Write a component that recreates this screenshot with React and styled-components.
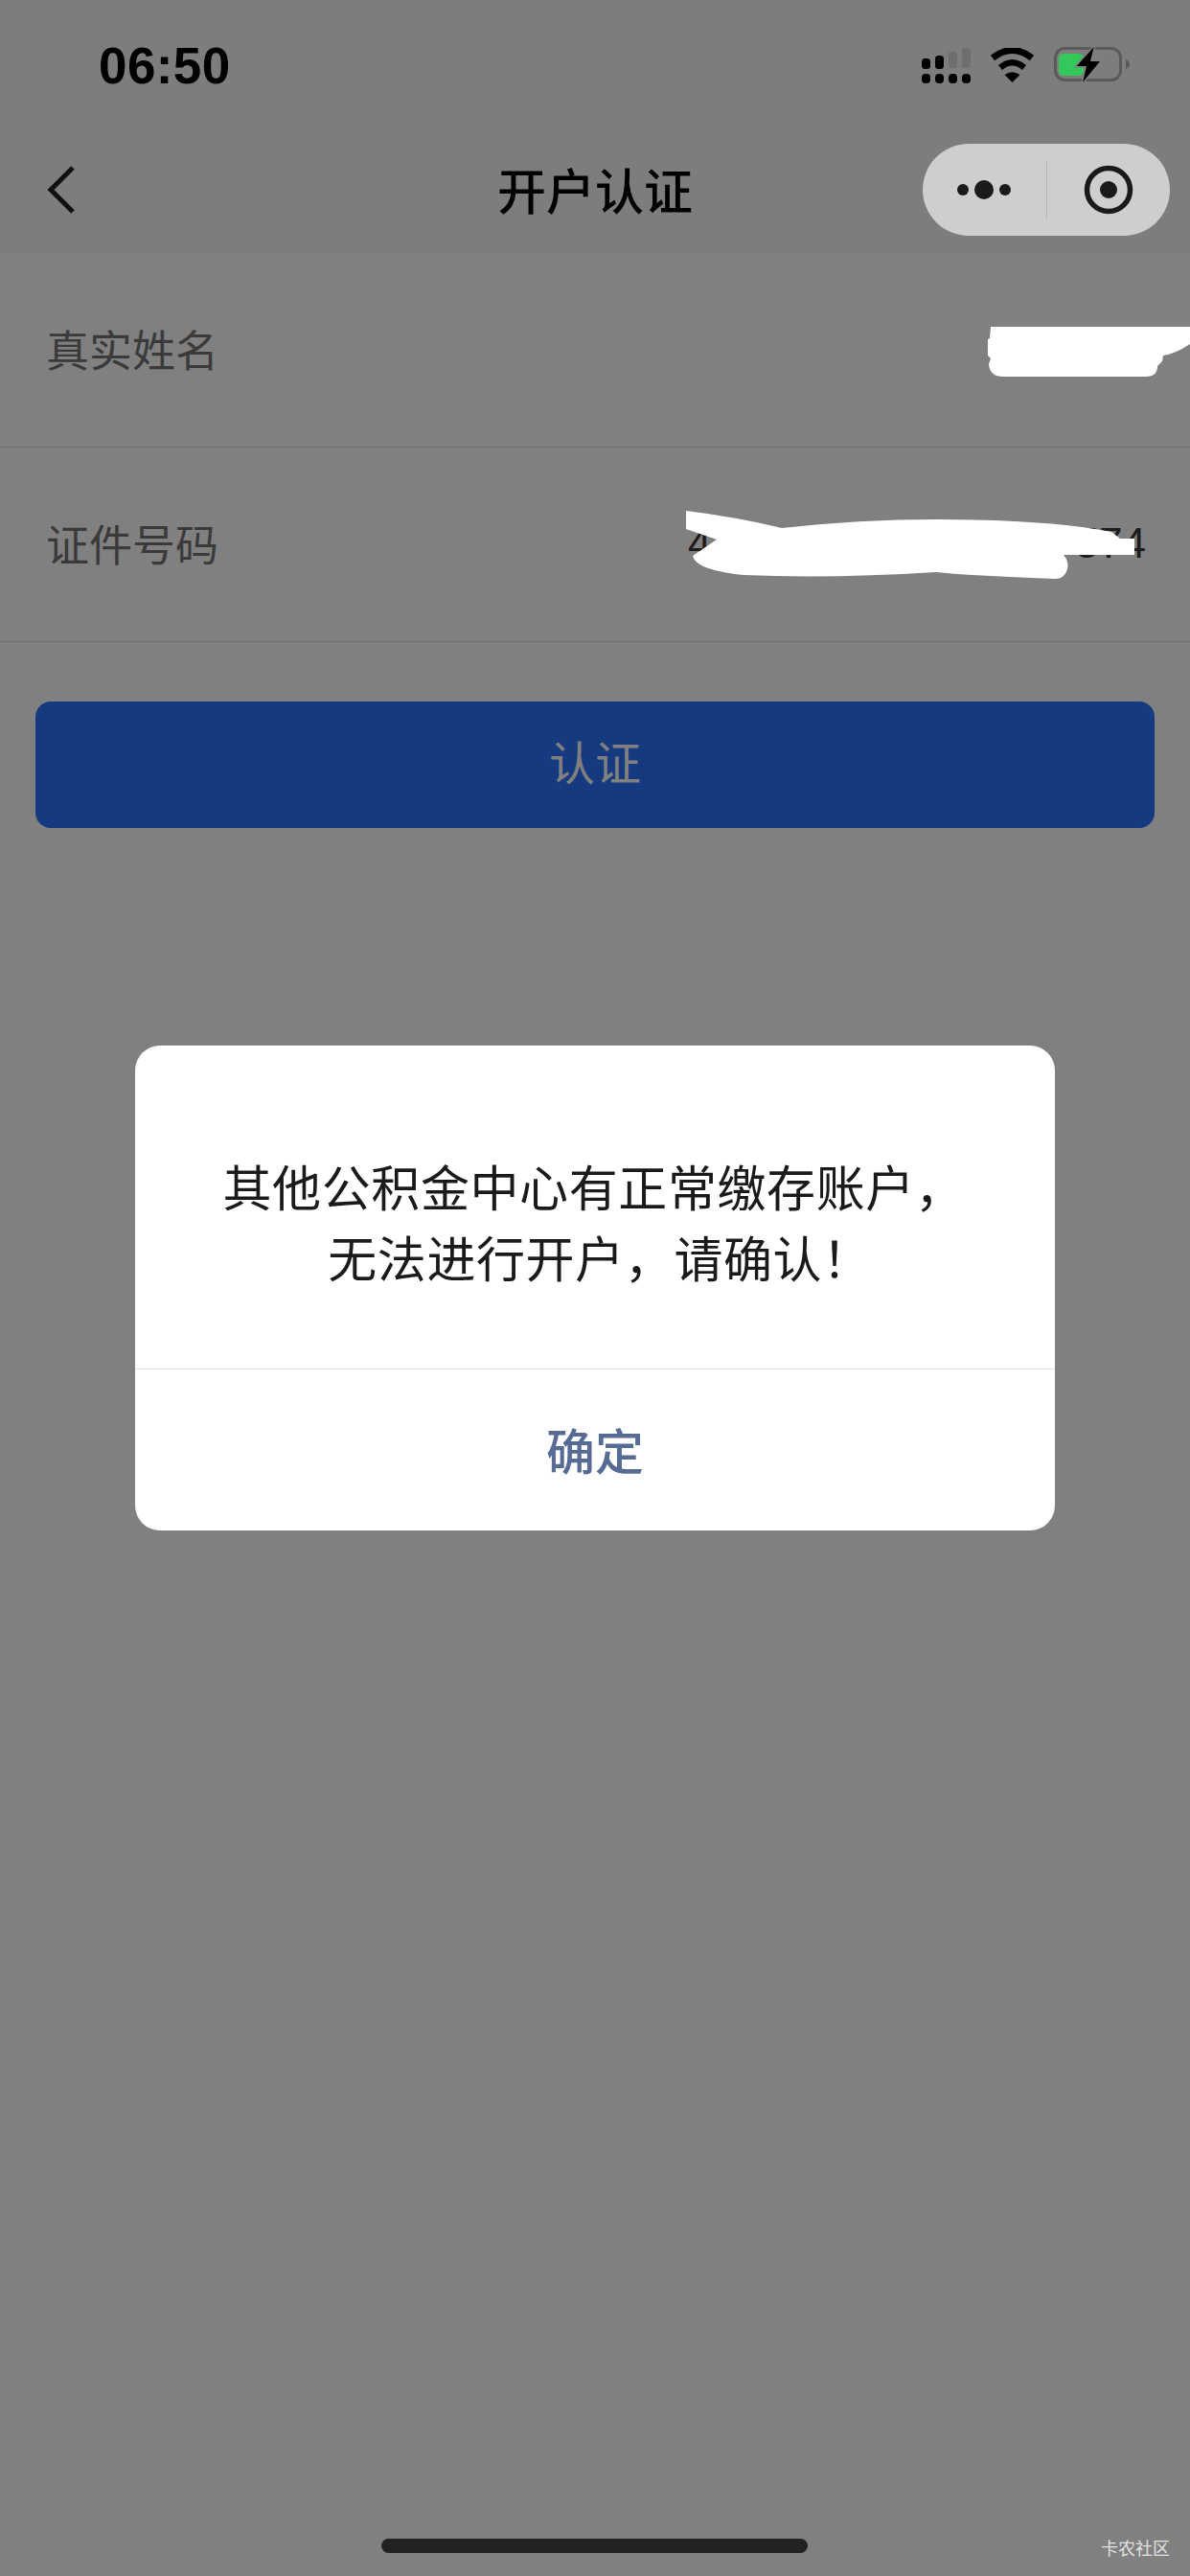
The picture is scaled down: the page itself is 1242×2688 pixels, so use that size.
import React from 'react';
import styled, { createGlobalStyle } from 'styled-components';

const CJK = '"Liberation Sans", "Noto Sans CJK SC", sans-serif';

const GlobalStyle = createGlobalStyle`
  html, body {
    margin: 0;
    padding: 0;
    background: #808080;
  }
  * {
    box-sizing: border-box;
  }
`;

const Page = styled.div`
  position: relative;
  width: 1242px;
  height: 2688px;
  overflow: hidden;
  background: #808080;
  font-family: ${CJK};
`;

const Header = styled.header`
  height: 264px;
  background: #7d7d7d;
`;

const StatusBar = styled.div`
  height: 132px;
  padding: 4px 63px 0 103px;
  display: flex;
  align-items: center;
  justify-content: space-between;
`;

const Time = styled.span`
  font-size: 53px;
  font-weight: 700;
  letter-spacing: 0.4px;
  color: #000;
`;

const StatusIcons = styled.div`
  display: flex;
  align-items: center;
  gap: 20px;
`;

const NavBar = styled.div`
  position: relative;
  height: 132px;
  padding: 0 21px 0 48px;
  display: flex;
  align-items: center;
  justify-content: space-between;
`;

const NavTitle = styled.h1`
  position: absolute;
  left: 0;
  right: 0;
  margin: 0;
  padding-bottom: 3px;
  text-align: center;
  font-size: 51px;
  font-weight: 500;
  font-family: "Noto Sans CJK SC", sans-serif;
  color: #000;
`;

const Capsule = styled.div`
  width: 258px;
  height: 96px;
  border-radius: 48px;
  background: #cecece;
  display: grid;
  grid-template-columns: 1fr 1px 1fr;
  align-items: center;
  justify-items: center;
`;

const CapsuleDivider = styled.span`
  width: 1px;
  height: 60px;
  background: #b4b4b4;
`;

const Row = styled.div`
  position: relative;
  height: 203px;
  padding: 0 46px 3px 48px;
  border-bottom: 1px solid #6f6f6f;
  display: flex;
  align-items: center;
  justify-content: space-between;
`;

const Label = styled.span`
  font-size: 45px;
  color: #3a3a3a;
`;

const Value = styled.span`
  width: 478px;
  display: flex;
  justify-content: space-between;
  font-size: 44px;
  color: #1c1c1c;
`;

const Redaction = styled.svg`
  position: absolute;
  right: 0;
  top: ${(p) => p.$top}px;
`;

const SubmitButton = styled.button`
  display: block;
  width: 1168px;
  height: 132px;
  margin: 62px 0 0 37px;
  padding: 0 0 10px;
  border: 0;
  border-radius: 16px;
  background: #153a7f;
  color: #808080;
  font-family: ${CJK};
  font-size: 48px;
`;

const Mask = styled.div`
  position: absolute;
  inset: 0;
  display: flex;
  align-items: center;
  justify-content: center;
`;

const Dialog = styled.div`
  width: 960px;
  height: 506px;
  border-radius: 26px;
  background: #fff;
  display: flex;
  flex-direction: column;
  overflow: hidden;
`;

const DialogBody = styled.div`
  flex: 1;
  padding-top: 38px;
  border-bottom: 1px solid #e4e4e4;
  display: flex;
  flex-direction: column;
  align-items: center;
  justify-content: center;
  font-size: 51px;
  line-height: 74px;
  letter-spacing: 0.6px;
  color: #1a1a1a;
`;

const DialogLine = styled.div`
  margin-left: ${(p) => p.$nudge}px;
`;

const DialogAction = styled.div`
  height: 168px;
  padding-bottom: 3px;
  display: flex;
  align-items: center;
  justify-content: center;
  font-size: 51px;
  font-weight: 500;
  font-family: "Noto Sans CJK SC", sans-serif;
  color: #576b95;
`;

const HomeBar = styled.div`
  position: absolute;
  left: 398px;
  top: 2649px;
  width: 445px;
  height: 15px;
  border-radius: 8px;
  background: #222;
`;

const Watermark = styled.span`
  position: absolute;
  right: 21px;
  top: 2645px;
  font-size: 18px;
  color: #e2e2e2;
`;

function SignalIcon() {
  return (
    <svg width="51" height="37" viewBox="0 0 51 37">
      <rect x="0" y="11" width="9" height="11" rx="3.5" fill="#000" />
      <rect x="14" y="8" width="9" height="14" rx="3.5" fill="#000" />
      <rect x="28" y="4" width="9" height="17" rx="3" fill="#6e6e6e" />
      <rect x="42" y="0" width="9" height="21" rx="3" fill="#6e6e6e" />
      {[0, 14, 28, 42].map((x) => (
        <rect key={x} x={x} y="27" width="9" height="10" rx="4" fill="#000" />
      ))}
    </svg>
  );
}

function WifiIcon() {
  return (
    <svg width="47" height="36" viewBox="0 0 47 36">
      <path d="M3 10.5 Q23.5 -5.5 44 10.5" fill="none" stroke="#000" strokeWidth="7" />
      <path d="M11 20.5 Q23.5 10 36 20.5" fill="none" stroke="#000" strokeWidth="6.5" />
      <path d="M15.5 28 Q23.5 22.5 31.5 28 L23.5 36 Z" fill="#000" />
    </svg>
  );
}

function BatteryIcon() {
  return (
    <svg width="79" height="38" viewBox="0 0 79 38">
      <rect x="1.5" y="1.5" width="68" height="33" rx="10" fill="none" stroke="#5a5a5a" strokeWidth="3" />
      <rect x="5" y="7" width="26" height="23" rx="5" fill="#34c759" />
      <path d="M75 13 Q79 15 79 18 Q79 21 75 23 Z" fill="#5a5a5a" />
      <path
        d="M41.7 0 L23.7 20 L34 20 L30 37 L48 15 L38 15 Z"
        fill="#000"
        stroke="#808080"
        strokeWidth="3"
        paintOrder="stroke"
      />
    </svg>
  );
}

function BackIcon() {
  return (
    <svg width="32" height="52" viewBox="0 0 32 52">
      <path d="M28 3 L5 26 L28 49" fill="none" stroke="#111" strokeWidth="5" />
    </svg>
  );
}

function MoreIcon() {
  return (
    <svg width="56" height="20" viewBox="0 0 56 20">
      <circle cx="6" cy="10" r="6" fill="#1a1a1a" />
      <circle cx="28" cy="10" r="10" fill="#1a1a1a" />
      <circle cx="50" cy="10" r="6" fill="#1a1a1a" />
    </svg>
  );
}

function TargetIcon() {
  return (
    <svg width="52" height="52" viewBox="0 0 52 52">
      <circle cx="26" cy="26" r="22.5" fill="none" stroke="#1a1a1a" strokeWidth="5.5" />
      <circle cx="26" cy="26" r="9" fill="#1a1a1a" />
    </svg>
  );
}

export default function App() {
  return (
    <Page>
      <GlobalStyle />
      <Header>
        <StatusBar>
          <Time>06:50</Time>
          <StatusIcons>
            <SignalIcon />
            <WifiIcon />
            <BatteryIcon />
          </StatusIcons>
        </StatusBar>
        <NavBar>
          <BackIcon />
          <NavTitle>开户认证</NavTitle>
          <Capsule>
            <MoreIcon />
            <CapsuleDivider />
            <TargetIcon />
          </Capsule>
        </NavBar>
      </Header>
      <Row>
        <Label>真实姓名</Label>
        <Redaction $top={77} width="211" height="53" viewBox="0 0 211 53">
          <path
            d="M3 0 H211 V18 Q196 28 183 30 L182 36 L177 41 Q177 52 165 52 H16 Q2 52 1 39 L3 33 L0 30 V13 L2 12 Z"
            fill="#fff"
          />
        </Redaction>
      </Row>
      <Row>
        <Label>证件号码</Label>
        <Value>
          <span>47</span>
          <span>574</span>
        </Value>
        <Redaction $top={66} width="526" height="72" viewBox="0 0 526 72">
          <path
            d="M0 0 Q50 6 100 18 Q180 9 261 9 Q380 9 444 22 L453 29 H468 V46 H394 Q400 53 398 61 Q395 71 385 71 Q300 68 261 64 Q150 71 60 67 Q10 62 7 47 L32 30 L0 19 Z"
            fill="#fff"
          />
        </Redaction>
      </Row>
      <SubmitButton>认证</SubmitButton>
      <Mask>
        <Dialog>
          <DialogBody>
            <DialogLine $nudge={-3}>其他公积金中心有正常缴存账户，</DialogLine>
            <DialogLine $nudge={10}>无法进行开户，请确认！</DialogLine>
          </DialogBody>
          <DialogAction>确定</DialogAction>
        </Dialog>
      </Mask>
      <HomeBar />
      <Watermark>卡农社区</Watermark>
    </Page>
  );
}
